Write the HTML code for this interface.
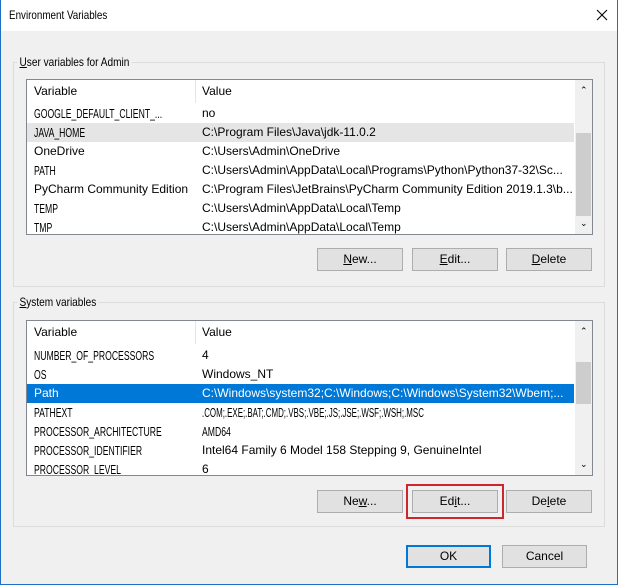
<!DOCTYPE html><html><head><style>
*{margin:0;padding:0;box-sizing:border-box}
body{width:618px;height:585px;background:#f0f0f0;font-family:"Liberation Sans",sans-serif;font-size:12px;color:#000;position:relative;overflow:hidden}
.a{position:absolute}
.win{left:0;top:0;width:618px;height:585px;border:1px solid #1f6fc5;border-top:none}
.title{left:1px;top:0;width:616px;height:31px;background:#fff}
.grp{border:1px solid #dcdcdc}
.leg{background:#f0f0f0;padding:0 3px;transform:scaleX(.84);transform-origin:left}
.list{background:#fff;border:1px solid #828790}
.row{position:absolute;left:0;height:19px;line-height:19px;width:547px;white-space:nowrap}
.row span{position:absolute}
.c1{left:7px}.c2{left:175px}
.u{transform:scaleX(.665);transform-origin:left;font-size:13px}
.hdr{position:absolute;left:0;top:0;width:547px;height:23px;line-height:23px}
.hdr i{position:absolute;left:168px;top:0;width:1px;height:23px;background:#e5e5e5}
.sb{position:absolute;right:0;top:0;width:17px;height:100%;background:#f0f0f0}
.btn{position:absolute;height:23px;background:#e1e1e1;border:1px solid #adadad;text-align:center;line-height:21px}
</style></head><body>
<div class="a win"></div>
<div class="a title"></div>
<div class="a" style="left:9px;top:8px;transform:scaleX(.82);transform-origin:left">Environment Variables</div>
<svg class="a" style="left:596px;top:9px" width="12" height="12"><path d="M1 1L11 11M11 1L1 11" stroke="#000" stroke-width="1.1"/></svg>

<div class="a grp" style="left:13px;top:62px;width:592px;height:225px"></div>
<div class="a leg" style="left:17px;top:55px"><u>U</u>ser variables for Admin</div>
<div class="a list" style="left:26px;top:79px;width:567px;height:156px;overflow:hidden">
 <div class="hdr"><span class="a c1">Variable</span><i></i><span class="a c2">Value</span></div>
 <div class="row" style="top:24px"><span class="c1 u">GOOGLE_DEFAULT_CLIENT_...</span><span class="c2">no</span></div>
 <div class="row" style="top:43px;background:#e5e5e5"><span class="c1 u">JAVA_HOME</span><span class="c2">C:\Program Files\Java\jdk-11.0.2</span></div>
 <div class="row" style="top:62px"><span class="c1">OneDrive</span><span class="c2">C:\Users\Admin\OneDrive</span></div>
 <div class="row" style="top:81px"><span class="c1 u">PATH</span><span class="c2">C:\Users\Admin\AppData\Local\Programs\Python\Python37-32\Sc...</span></div>
 <div class="row" style="top:100px"><span class="c1">PyCharm Community Edition</span><span class="c2">C:\Program Files\JetBrains\PyCharm Community Edition 2019.1.3\b...</span></div>
 <div class="row" style="top:119px"><span class="c1 u">TEMP</span><span class="c2">C:\Users\Admin\AppData\Local\Temp</span></div>
 <div class="row" style="top:138px"><span class="c1 u">TMP</span><span class="c2">C:\Users\Admin\AppData\Local\Temp</span></div>
 <div class="sb"><div class="a" style="left:5px;top:5px;font-size:9px">&#8963;</div><div class="a" style="left:1px;top:53px;width:15px;height:83px;background:#cdcdcd"></div><div class="a" style="left:5px;top:138px;font-size:9px">&#8964;</div></div>
</div>
<div class="btn" style="left:317px;top:248px;width:86px"><u>N</u>ew...</div>
<div class="btn" style="left:412px;top:248px;width:86px"><u>E</u>dit...</div>
<div class="btn" style="left:506px;top:248px;width:86px"><u>D</u>elete</div>

<div class="a grp" style="left:13px;top:302px;width:592px;height:225px"></div>
<div class="a leg" style="left:17px;top:295px"><u>S</u>ystem variables</div>
<div class="a list" style="left:26px;top:320px;width:567px;height:156px;overflow:hidden">
 <div class="hdr"><span class="a c1">Variable</span><i></i><span class="a c2">Value</span></div>
 <div class="row" style="top:25px"><span class="c1 u">NUMBER_OF_PROCESSORS</span><span class="c2">4</span></div>
 <div class="row" style="top:44px"><span class="c1 u">OS</span><span class="c2">Windows_NT</span></div>
 <div class="row" style="top:63px;background:#0078d7;color:#fff"><span class="c1">Path</span><span class="c2">C:\Windows\system32;C:\Windows;C:\Windows\System32\Wbem;...</span></div>
 <div class="row" style="top:82px"><span class="c1 u">PATHEXT</span><span class="c2 u" style="transform:scaleX(.61)">.COM;.EXE;.BAT;.CMD;.VBS;.VBE;.JS;.JSE;.WSF;.WSH;.MSC</span></div>
 <div class="row" style="top:101px"><span class="c1 u">PROCESSOR_ARCHITECTURE</span><span class="c2 u">AMD64</span></div>
 <div class="row" style="top:120px"><span class="c1 u">PROCESSOR_IDENTIFIER</span><span class="c2">Intel64 Family 6 Model 158 Stepping 9, GenuineIntel</span></div>
 <div class="row" style="top:139px"><span class="c1 u">PROCESSOR_LEVEL</span><span class="c2">6</span></div>
 <div class="sb"><div class="a" style="left:5px;top:5px;font-size:9px">&#8963;</div><div class="a" style="left:1px;top:41px;width:15px;height:42px;background:#cdcdcd"></div><div class="a" style="left:5px;top:138px;font-size:9px">&#8964;</div></div>
</div>
<div class="btn" style="left:317px;top:490px;width:86px">Ne<u>w</u>...</div>
<div class="btn" style="left:412px;top:490px;width:86px">Ed<u>i</u>t...</div>
<div class="btn" style="left:506px;top:490px;width:86px">De<u>l</u>ete</div>
<div class="a" style="left:406px;top:484px;width:98px;height:35px;border:2px solid #d0262b"></div>

<div class="btn" style="left:406px;top:545px;width:85px;border:2px solid #0078d7;line-height:19px">OK</div>
<div class="btn" style="left:502px;top:545px;width:85px">Cancel</div>
</body></html>
